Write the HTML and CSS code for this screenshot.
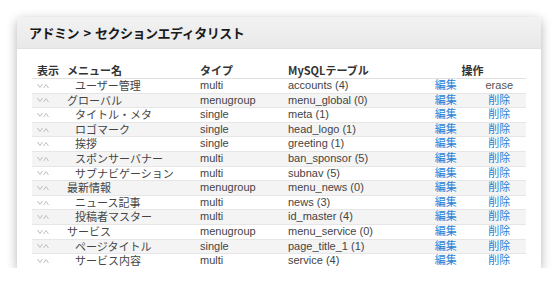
FILE: index.html
```html
<!DOCTYPE html>
<html lang="ja">
<head>
    <meta charset="UTF-8" />
    <title>セクションエディタリスト</title>
    <link rel="stylesheet" href="styles.css">
</head>
<body>
    <div class="panel">
        <div class="panel-header">
            <h1>アドミン &gt; セクションエディタリスト</h1>
        </div>
        <div class="panel-body">
            <table class="sections">
                <thead>
                    <tr>
                        <th class="c-show">表示</th>
                        <th class="c-name">メニュー名</th>
                        <th class="c-type">タイプ</th>
                        <th class="c-table">MySQLテーブル</th>
                        <th class="c-ops" colspan="2">操作</th>
                    </tr>
                </thead>
                <tbody>
                    <tr><td class="c-show"><svg class="arrows" width="12" height="6" viewBox="0 0 12 6"><path d="M0.5 1 L3 4.5 L5.5 1 M6.5 5 L9 1.5 L11.5 5"/></svg></td><td class="c-name child">ユーザー管理</td><td>multi</td><td>accounts (4)</td><td class="c-op"><a href="#">編集</a></td><td class="c-op">erase</td></tr>
                    <tr><td class="c-show"><svg class="arrows" width="12" height="6" viewBox="0 0 12 6"><path d="M0.5 1 L3 4.5 L5.5 1 M6.5 5 L9 1.5 L11.5 5"/></svg></td><td class="c-name">グローバル</td><td>menugroup</td><td>menu_global (0)</td><td class="c-op"><a href="#">編集</a></td><td class="c-op"><a href="#">削除</a></td></tr>
                    <tr><td class="c-show"><svg class="arrows" width="12" height="6" viewBox="0 0 12 6"><path d="M0.5 1 L3 4.5 L5.5 1 M6.5 5 L9 1.5 L11.5 5"/></svg></td><td class="c-name child">タイトル・メタ</td><td>single</td><td>meta (1)</td><td class="c-op"><a href="#">編集</a></td><td class="c-op"><a href="#">削除</a></td></tr>
                    <tr><td class="c-show"><svg class="arrows" width="12" height="6" viewBox="0 0 12 6"><path d="M0.5 1 L3 4.5 L5.5 1 M6.5 5 L9 1.5 L11.5 5"/></svg></td><td class="c-name child">ロゴマーク</td><td>single</td><td>head_logo (1)</td><td class="c-op"><a href="#">編集</a></td><td class="c-op"><a href="#">削除</a></td></tr>
                    <tr><td class="c-show"><svg class="arrows" width="12" height="6" viewBox="0 0 12 6"><path d="M0.5 1 L3 4.5 L5.5 1 M6.5 5 L9 1.5 L11.5 5"/></svg></td><td class="c-name child">挨拶</td><td>single</td><td>greeting (1)</td><td class="c-op"><a href="#">編集</a></td><td class="c-op"><a href="#">削除</a></td></tr>
                    <tr><td class="c-show"><svg class="arrows" width="12" height="6" viewBox="0 0 12 6"><path d="M0.5 1 L3 4.5 L5.5 1 M6.5 5 L9 1.5 L11.5 5"/></svg></td><td class="c-name child">スポンサーバナー</td><td>multi</td><td>ban_sponsor (5)</td><td class="c-op"><a href="#">編集</a></td><td class="c-op"><a href="#">削除</a></td></tr>
                    <tr><td class="c-show"><svg class="arrows" width="12" height="6" viewBox="0 0 12 6"><path d="M0.5 1 L3 4.5 L5.5 1 M6.5 5 L9 1.5 L11.5 5"/></svg></td><td class="c-name child">サブナビゲーション</td><td>multi</td><td>subnav (5)</td><td class="c-op"><a href="#">編集</a></td><td class="c-op"><a href="#">削除</a></td></tr>
                    <tr><td class="c-show"><svg class="arrows" width="12" height="6" viewBox="0 0 12 6"><path d="M0.5 1 L3 4.5 L5.5 1 M6.5 5 L9 1.5 L11.5 5"/></svg></td><td class="c-name">最新情報</td><td>menugroup</td><td>menu_news (0)</td><td class="c-op"><a href="#">編集</a></td><td class="c-op"><a href="#">削除</a></td></tr>
                    <tr><td class="c-show"><svg class="arrows" width="12" height="6" viewBox="0 0 12 6"><path d="M0.5 1 L3 4.5 L5.5 1 M6.5 5 L9 1.5 L11.5 5"/></svg></td><td class="c-name child">ニュース記事</td><td>multi</td><td>news (3)</td><td class="c-op"><a href="#">編集</a></td><td class="c-op"><a href="#">削除</a></td></tr>
                    <tr><td class="c-show"><svg class="arrows" width="12" height="6" viewBox="0 0 12 6"><path d="M0.5 1 L3 4.5 L5.5 1 M6.5 5 L9 1.5 L11.5 5"/></svg></td><td class="c-name child">投稿者マスター</td><td>multi</td><td>id_master (4)</td><td class="c-op"><a href="#">編集</a></td><td class="c-op"><a href="#">削除</a></td></tr>
                    <tr><td class="c-show"><svg class="arrows" width="12" height="6" viewBox="0 0 12 6"><path d="M0.5 1 L3 4.5 L5.5 1 M6.5 5 L9 1.5 L11.5 5"/></svg></td><td class="c-name">サービス</td><td>menugroup</td><td>menu_service (0)</td><td class="c-op"><a href="#">編集</a></td><td class="c-op"><a href="#">削除</a></td></tr>
                    <tr><td class="c-show"><svg class="arrows" width="12" height="6" viewBox="0 0 12 6"><path d="M0.5 1 L3 4.5 L5.5 1 M6.5 5 L9 1.5 L11.5 5"/></svg></td><td class="c-name child">ページタイトル</td><td>single</td><td>page_title_1 (1)</td><td class="c-op"><a href="#">編集</a></td><td class="c-op"><a href="#">削除</a></td></tr>
                    <tr><td class="c-show"><svg class="arrows" width="12" height="6" viewBox="0 0 12 6"><path d="M0.5 1 L3 4.5 L5.5 1 M6.5 5 L9 1.5 L11.5 5"/></svg></td><td class="c-name child">サービス内容</td><td>multi</td><td>service (4)</td><td class="c-op"><a href="#">編集</a></td><td class="c-op"><a href="#">削除</a></td></tr>
                </tbody>
            </table>
        </div>
    </div>
</body>
</html>
```

FILE: styles.css
```css
body {
    margin: 0;
    padding: 17px 0 0 17px;
    background: #fff;
    font-family: "Liberation Sans", "Noto Sans CJK JP", sans-serif;
    color: #333;
    overflow: hidden;
}

.panel {
    width: 524px;
    height: 251px;
    background: #fff;
    border-radius: 4px 4px 0 0;
    box-shadow: 0 3px 11px rgba(0,0,0,0.3);
    overflow: hidden;
}

.panel-header {
    height: 31px;
    background: linear-gradient(#f2f2f2, #e9e9e9);
    border-bottom: 1px solid #e2e2e2;
    padding-left: 12px;
    display: flex;
    align-items: center;
}

.panel-header h1 {
    margin: 0;
    font-family: "Noto Sans CJK JP", sans-serif;
    font-size: 13px;
    font-weight: bold;
    color: #1a1a1a;
    letter-spacing: -0.5px;
    word-spacing: 2px;
}

.panel-body {
    padding: 14px 0 0 15px;
}

.sections {
    border-collapse: collapse;
    table-layout: fixed;
    width: 494px;
    font-size: 11px;
}

.sections th {
    font-family: "Noto Sans CJK JP", sans-serif;
    font-weight: bold;
    text-align: left;
    color: #333;
    height: 15px;
    line-height: 15px;
    padding: 0 0 0 4px;
    border-bottom: 1px solid #e0e0e0;
}

.sections td {
    height: 13.6px;
    line-height: 13.6px;
    padding: 0 0 0 4px;
    border-bottom: 1px solid #e6e6e6;
    white-space: nowrap;
    color: #444;
}

.sections tbody tr:nth-child(even) td {
    background: #f4f4f4;
}

.sections .c-show { width: 26px; padding-left: 5px; }
.sections th.c-name { width: 129px; }
.sections th.c-type { width: 84px; }
.sections th.c-table { width: 131px; }
.sections th.c-ops { text-align: center; padding: 0; }

.sections td.c-name { font-family: "Noto Sans CJK JP", sans-serif; }
.sections td.child { padding-left: 12px; }

.sections td.c-op {
    width: 54px;
    padding: 0;
    text-align: center;
    color: #555;
}

.sections a {
    color: #2b7fd6;
    text-decoration: none;
}

.arrows {
    display: block;
    fill: none;
    stroke: #bdbdbd;
    stroke-width: 1;
}
```
